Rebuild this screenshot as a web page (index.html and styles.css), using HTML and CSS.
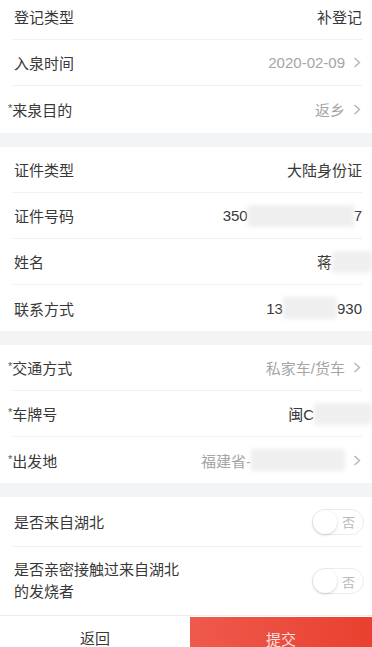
FILE: index.html
```html
<!DOCTYPE html>
<html lang="zh-CN">
<head>
    <meta charset="UTF-8">
    <meta name="viewport" content="width=device-width, initial-scale=1.0">
    <title>补登记</title>
    <link rel="stylesheet" href="styles.css">
</head>
<body>
    <div class="page">
        <section class="group">
            <div class="row">
                <span class="label">登记类型</span>
                <span class="value">补登记</span>
            </div>
            <div class="row">
                <span class="label">入泉时间</span>
                <span class="value muted">2020-02-09 <svg class="arrow" viewBox="0 0 8 12"><polyline points="1.5,1.5 6.5,6 1.5,10.5"/></svg></span>
            </div>
            <div class="row">
                <span class="label"><i class="star">*</i>来泉目的</span>
                <span class="value muted">返乡 <svg class="arrow" viewBox="0 0 8 12"><polyline points="1.5,1.5 6.5,6 1.5,10.5"/></svg></span>
            </div>
        </section>

        <section class="group">
            <div class="row">
                <span class="label">证件类型</span>
                <span class="value">大陆身份证</span>
            </div>
            <div class="row">
                <span class="label">证件号码</span>
                <span class="value">350<i class="mask" style="width:106px"></i>7</span>
            </div>
            <div class="row">
                <span class="label">姓名</span>
                <span class="value">蒋<i class="mask mask-edge" style="width:40px"></i></span>
            </div>
            <div class="row">
                <span class="label">联系方式</span>
                <span class="value">13<i class="mask" style="width:54px"></i>930</span>
            </div>
        </section>

        <section class="group">
            <div class="row">
                <span class="label"><i class="star">*</i>交通方式</span>
                <span class="value muted">私家车/货车 <svg class="arrow" viewBox="0 0 8 12"><polyline points="1.5,1.5 6.5,6 1.5,10.5"/></svg></span>
            </div>
            <div class="row">
                <span class="label"><i class="star">*</i>车牌号</span>
                <span class="value">闽C<i class="mask mask-edge" style="width:58px"></i></span>
            </div>
            <div class="row">
                <span class="label"><i class="star">*</i>出发地</span>
                <span class="value muted">福建省-<i class="mask" style="width:94px"></i> <svg class="arrow" viewBox="0 0 8 12"><polyline points="1.5,1.5 6.5,6 1.5,10.5"/></svg></span>
            </div>
        </section>

        <section class="group">
            <div class="row row-tall">
                <span class="label">是否来自湖北</span>
                <span class="switch"><i class="knob"></i>否</span>
            </div>
            <div class="row row-double">
                <span class="label wrap">是否亲密接触过来自湖北的发烧者</span>
                <span class="switch"><i class="knob"></i>否</span>
            </div>
        </section>
    </div>

    <div class="footer">
        <button class="back">返回</button>
        <button class="submit">提交</button>
    </div>
</body>
</html>
```

FILE: styles.css
```css
* {
    box-sizing: border-box;
}
body {
    margin: 0;
    font-family: 'Liberation Sans', 'Noto Sans CJK SC', sans-serif;
    font-size: 15px;
    color: #383838;
    background-color: #f3f4f6;
    overflow: hidden;
}
.page {
    margin-top: -6px;
}
.group {
    background-color: #fff;
    margin-bottom: 14px;
}
.group:first-child {
    padding-bottom: 1px;
}
.group:last-child {
    margin-bottom: 0;
}
.row {
    display: flex;
    align-items: center;
    justify-content: space-between;
    height: 46px;
    margin: 0 10px 0 13px;
    border-bottom: 1px solid #f0f0f0;
}
.row:last-child {
    border-bottom: none;
}
.row-tall {
    height: 50px;
}
.row-double {
    height: 68px;
}
.label {
    padding-left: 1px;
    white-space: nowrap;
}
.label.wrap {
    white-space: normal;
    width: 172px;
    line-height: 22px;
}
.star {
    font-style: normal;
    font-size: 11px;
    color: #555;
    margin-left: -6px;
    vertical-align: 4px;
}
.value {
    display: flex;
    align-items: center;
    white-space: nowrap;
    color: #383838;
}
.value.muted {
    color: #a5a5a5;
}
.arrow {
    width: 8px;
    height: 13px;
    margin-left: 8px;
    margin-right: 1px;
    fill: none;
    stroke: #b5b5b5;
    stroke-width: 1.4;
}
.mask {
    display: inline-block;
    height: 22px;
    background-color: #efefef;
    filter: blur(2px);
}
.mask-edge {
    margin-right: -10px;
}
.switch {
    position: relative;
    display: flex;
    align-items: center;
    justify-content: flex-end;
    width: 52px;
    height: 26px;
    padding-right: 8px;
    margin-right: -2px;
    border: 1px solid #ececec;
    border-radius: 13px;
    font-size: 13px;
    color: #b8b8b8;
}
.knob {
    position: absolute;
    left: 0;
    top: 0;
    width: 24px;
    height: 24px;
    border-radius: 50%;
    background-color: #fff;
    box-shadow: 0 1px 3px rgba(0,0,0,0.18);
}
.footer {
    display: grid;
    grid-template-columns: 190px 1fr;
    height: 44px;
    border-top: 1px solid #eaeaea;
    background-color: #fff;
}
.footer button {
    border: none;
    font-family: inherit;
    font-size: 15px;
    cursor: pointer;
}
.back {
    background-color: #fff;
    color: #383838;
}
.submit {
    margin-top: 1px;
    background: linear-gradient(90deg, #ee5a4d, #e9402f);
    color: rgba(255,255,255,0.85);
}
```
